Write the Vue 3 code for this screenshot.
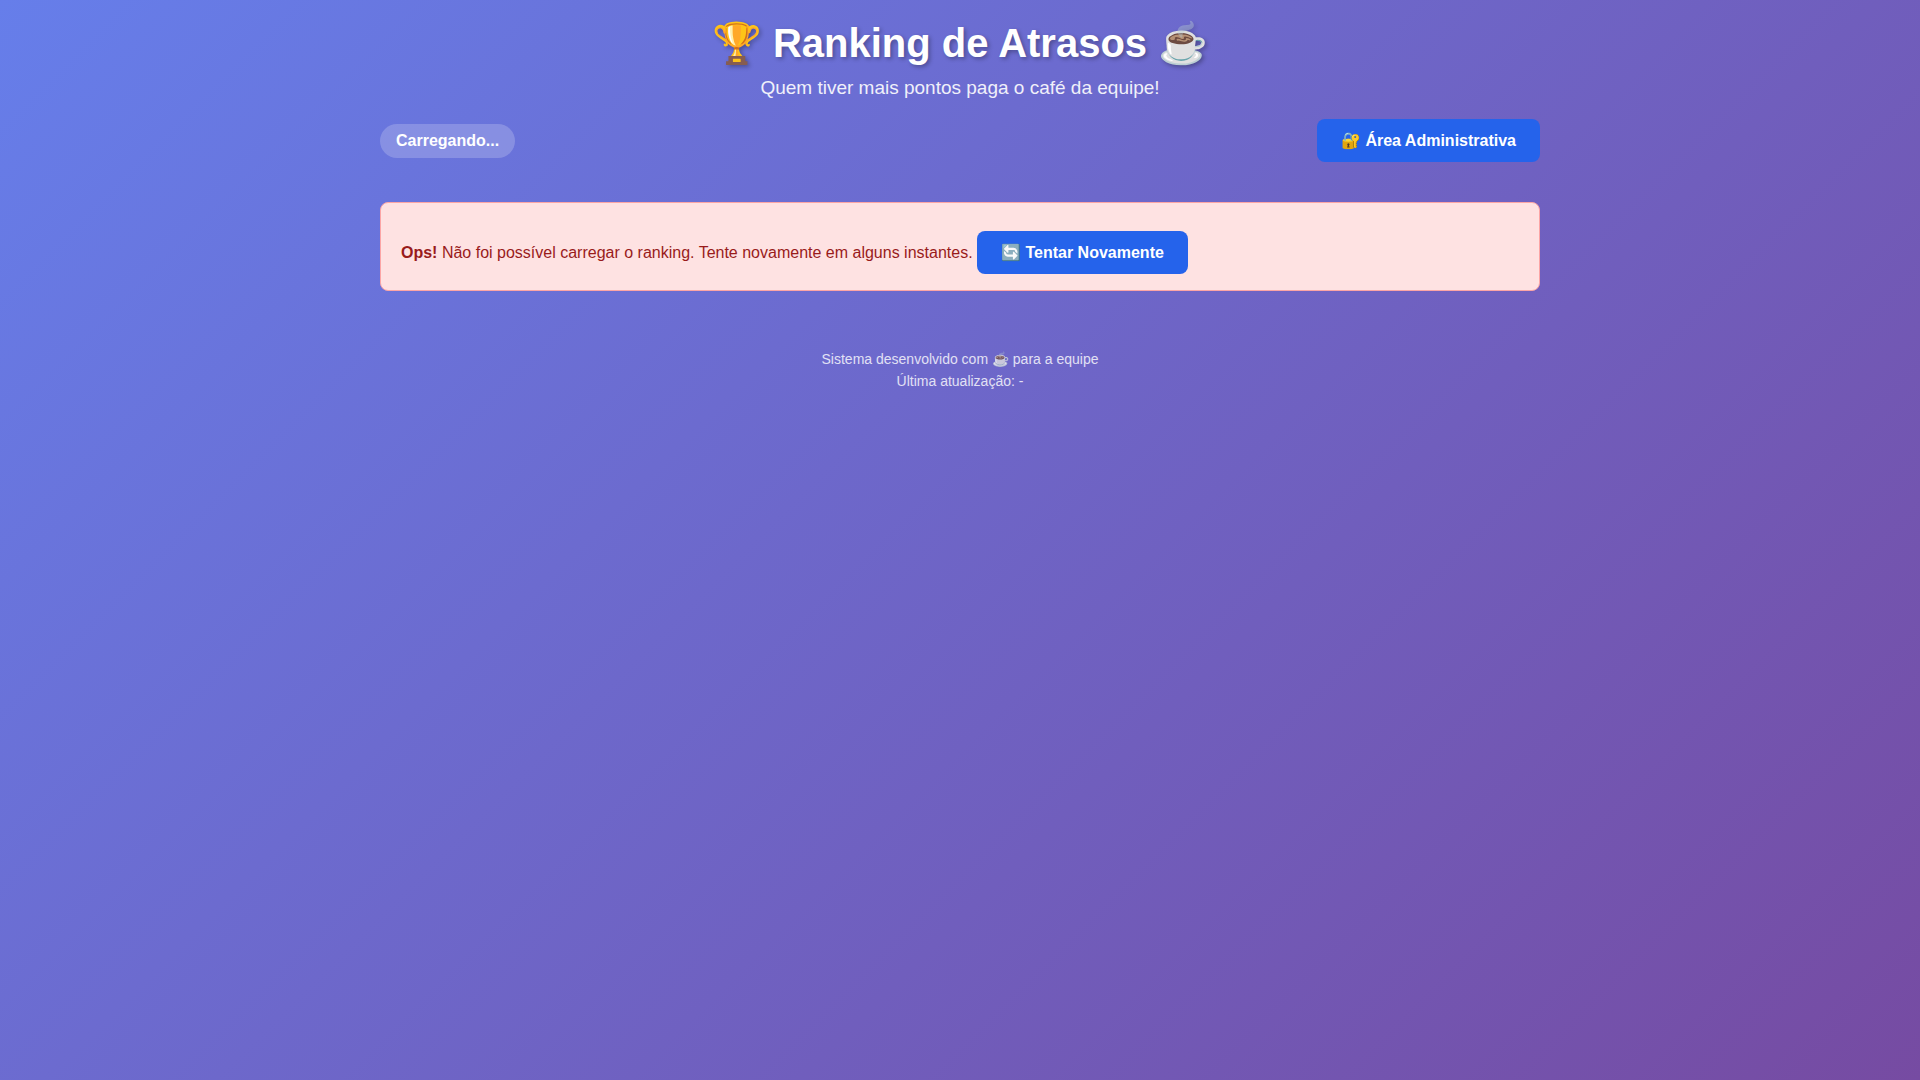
<script setup>
import { ref } from 'vue'

const status = ref('Carregando...')
const lastUpdate = ref('-')
</script>

<template>
  <div class="page">
    <div class="container">
      <header class="header">
        <h1 class="title">🏆 Ranking de Atrasos ☕</h1>
        <p class="subtitle">Quem tiver mais pontos paga o café da equipe!</p>
      </header>

      <nav class="toolbar">
        <span class="badge">{{ status }}</span>
        <a class="btn" href="#admin">🔐 Área Administrativa</a>
      </nav>

      <main class="alert" role="alert">
        <strong>Ops!</strong> Não foi possível carregar o ranking. Tente novamente em alguns instantes.
        <button class="btn retry" type="button">🔄 Tentar Novamente</button>
      </main>

      <footer class="footer">
        <p>Sistema desenvolvido com ☕ para a equipe</p>
        <p>Última atualização: {{ lastUpdate }}</p>
      </footer>
    </div>
  </div>
</template>

<style>
body {
  margin: 0;
}
</style>

<style scoped>
.page {
  min-height: 100vh;
  box-sizing: border-box;
  background: linear-gradient(135deg, #667eea 0%, #764ba2 100%);
  font-family: "Liberation Sans", Arial, sans-serif;
  font-size: 16px;
}

.container {
  box-sizing: border-box;
  max-width: 1200px;
  margin: 0 auto;
  padding: 20px;
}

.header {
  margin-bottom: 20px;
  text-align: center;
  color: #fff;
}

.title {
  margin: 0 0 10px;
  font-size: 40px;
  line-height: 46px;
  font-weight: 700;
  text-shadow: 2px 2px 4px rgba(0, 0, 0, 0.3);
}

.subtitle {
  margin: 0;
  font-size: 19px;
  line-height: 23px;
  opacity: 0.9;
}

.toolbar {
  display: flex;
  justify-content: space-between;
  align-items: center;
  margin-bottom: 40px;
}

.badge {
  padding: 8px 16px;
  border-radius: 20px;
  background: rgba(255, 255, 255, 0.2);
  color: #fff;
  font-weight: 600;
  line-height: 18px;
}

.btn {
  display: inline-block;
  padding: 12px 24px;
  border: none;
  border-radius: 8px;
  background: #2563eb;
  color: #fff;
  font-family: inherit;
  font-size: 16px;
  font-weight: 600;
  line-height: 19px;
  text-decoration: none;
  cursor: pointer;
}

.alert {
  padding: 16px 20px;
  border: 1px solid #fca5a5;
  border-radius: 8px;
  background: #fee2e2;
  color: #991b1b;
}

.retry {
  margin-top: 12px;
}

.footer {
  margin-top: 57px;
  text-align: center;
  font-size: 14px;
  line-height: 22px;
  color: #fff;
  opacity: 0.8;
}

.footer p {
  margin: 0;
}
</style>
